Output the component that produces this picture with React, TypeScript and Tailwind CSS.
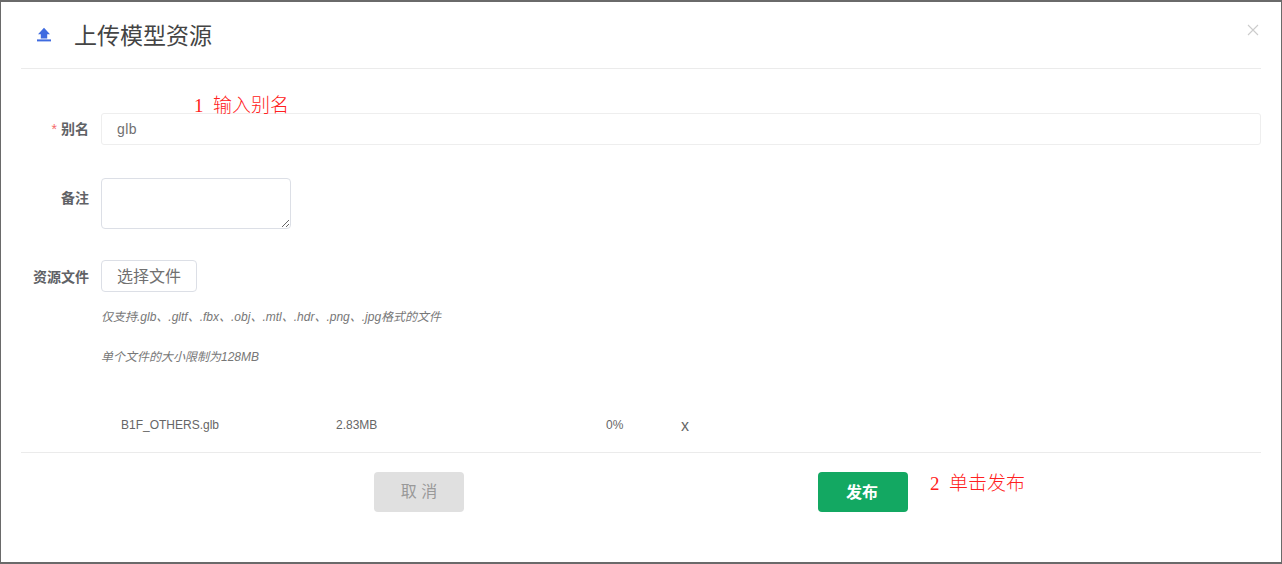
const sans = `font-['Liberation_Sans','Noto_Sans_CJK_SC',sans-serif]`;

function UploadIcon() {
  return (
    <svg width="16" height="16" viewBox="0 0 16 16" fill="#3f6be0">
      <path d="M8 .8 14 7.3H11.2V11.4H4.8V7.3H2Z" />
      <rect x="1" y="12.4" width="14" height="2" />
    </svg>
  );
}

function FormLabel({ text, required }: { text: string; required?: boolean }) {
  return (
    <label className="block w-[88px] shrink-0 text-right text-[14px] font-bold leading-5 text-[#606266]">
      {required && <span className="mr-1 font-normal text-[#f56c6c]">*</span>}
      {text}
    </label>
  );
}

export default function App() {
  return (
    <div className={`${sans} relative flex h-[564px] w-[1282px] flex-col overflow-hidden border border-t-2 border-b-2 border-[#6a6a6a] bg-white`}>
      {/* header */}
      <div className="mx-5 flex h-[67px] shrink-0 items-center border-b border-[#ebebeb] pl-[15px]">
        <UploadIcon />
        <span className="ml-[22px] pt-[2px] text-[23px] text-[#444444]">上传模型资源</span>
      </div>
      <button className="absolute right-[22px] top-[22px] text-[#cccccc]">
        <svg width="12" height="12" viewBox="0 0 12 12" stroke="currentColor" strokeWidth="1.1" fill="none">
          <path d="M1 1 11 11M11 1 1 11" />
        </svg>
      </button>

      {/* form */}
      <div className="flex flex-col pr-5 pt-[44px]">
        <div className="flex items-center gap-3">
          <FormLabel text="别名" required />
          <div className="flex h-8 flex-1 items-center rounded-[3px] border border-[#eeeeee] pl-[15px] text-[14px] tracking-[0.4px] text-[#707070]">
            glb
          </div>
        </div>
        <div className="mt-[33px] flex items-start gap-3">
          <div className="shrink-0 pt-[10px]">
            <FormLabel text="备注" />
          </div>
          <textarea className="h-[51px] w-[190px] rounded-[4px] border border-[#dcdfe6] bg-white" />
        </div>
        <div className="mt-[31px] flex items-center gap-3">
          <div className="shrink-0 pt-[2px]">
            <FormLabel text="资源文件" />
          </div>
          <button className="h-8 w-24 rounded-[4px] border border-[#dcdfe6] pt-[2px] text-[16px] text-[#707070]">选择文件</button>
        </div>
        <div className="ml-[100px] mt-[17px] flex flex-col gap-[24px] text-[12px] italic leading-4 text-[#777777]">
          <p>仅支持.glb、.gltf、.fbx、.obj、.mtl、.hdr、.png、.jpg格式的文件</p>
          <p>单个文件的大小限制为128MB</p>
        </div>
      </div>

      {/* selected file */}
      <div className="mt-[52px] flex h-4 items-center pl-[120px] text-[12px] text-[#666666]">
        <span className="w-[215px]">B1F_OTHERS.glb</span>
        <span className="w-[270px]">2.83MB</span>
        <span className="w-[75px]">0%</span>
        <span className="pt-[2px] text-[16px] text-[#666666]">x</span>
      </div>

      {/* footer */}
      <div className="mx-5 mt-[19px] flex justify-center gap-[354px] border-t border-[#ebebeb] pt-[19px]">
        <button className="h-10 w-[90px] rounded-[4px] bg-[#e0e0e0] text-[16px] text-[#999999]">取 消</button>
        <button className="h-10 w-[90px] rounded-[4px] bg-[#13a862] pt-[2px] pr-[2px] text-[16px] font-bold text-white">发布</button>
      </div>

      {/* annotations drawn over the page */}
      <span className="absolute left-[193px] top-[92px] font-['Liberation_Serif','Noto_Sans_CJK_SC',serif] text-[19px] font-light leading-6 text-[#ff2020]">1&nbsp;&nbsp;输入别名</span>
      <span className="absolute left-[929px] top-[470px] font-['Liberation_Serif','Noto_Sans_CJK_SC',serif] text-[19px] font-light leading-6 text-[#ff2020]">2&nbsp;&nbsp;单击发布</span>
    </div>
  );
}
